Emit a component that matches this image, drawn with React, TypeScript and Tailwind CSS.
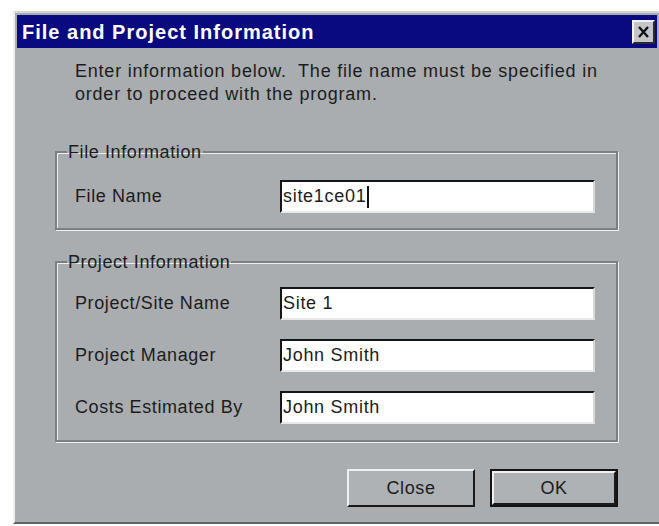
const FONT = "font-['Liberation_Sans',Arial,sans-serif]";

function CloseBox() {
  return (
    <div className="w-[23px] h-[24px] bg-[#c3c6c8] border-2 border-t-[#f2f2f2] border-l-[#f2f2f2] border-b-[#2a2a2a] border-r-[#2a2a2a] flex items-center justify-center">
      <svg width="13" height="12" viewBox="0 0 13 12">
        <path d="M2 1 L11 11 M11 1 L2 11" stroke="#111" strokeWidth="2.4" />
      </svg>
    </div>
  );
}

function Field({ label, value, caret }: { label: string; value: string; caret?: boolean }) {
  return (
    <div className="flex items-center">
      <span className="w-[205px] text-[18px] tracking-[0.6px] text-[#1c1c1c]">{label}</span>
      <div className="w-[315px] h-[33px] bg-white border-2 border-t-[#161616] border-l-[#161616] border-b-[#e6e8e9] border-r-[#d6d8d9] flex items-center pl-[1px] text-[18px] tracking-[0.7px] text-[#1c1c1c]">
        <span>{value}</span>
        {caret && <span className="w-[2px] h-[22px] bg-[#111] ml-[1px]" />}
      </div>
    </div>
  );
}

function Group({ title, children }: { title: string; children: React.ReactNode }) {
  return (
    <fieldset className="w-[563px] border-2 border-[#7c8083] shadow-[inset_1px_1px_0_#eceeef,1px_1px_0_#eceeef] pl-[18px]">
      <legend className="-ml-[8px] px-[1px] text-[18px] tracking-[0.6px] text-[#1c1c1c] leading-[20px]">{title}</legend>
      {children}
    </fieldset>
  );
}

function Button({ label, primary }: { label: string; primary?: boolean }) {
  const face =
    'bg-[#aeb2b5] border-2 border-t-[#eef0f1] border-l-[#eef0f1] border-b-[#1a1a1a] border-r-[#1a1a1a] flex items-center justify-center text-[18px] tracking-[0.6px] text-[#1c1c1c]';
  if (primary) {
    return (
      <div className="w-[128px] h-[38px] border-2 border-[#141414] flex">
        <div className={`flex-1 ${face}`}>{label}</div>
      </div>
    );
  }
  return <div className={`w-[128px] h-[38px] ${face}`}>{label}</div>;
}

export default function App() {
  return (
    <div className={`w-[659px] h-[526px] bg-white pt-[11px] pl-[13px] overflow-hidden ${FONT}`}>
      <div className="w-[646px] h-[513px] bg-[#a9adb0] border-t-2 border-l-2 border-t-[#d4d7d9] border-l-[#eef0f1] border-b-2 border-b-[#5d6164] p-[2px] flex flex-col">
        <div className="h-[33px] bg-[#0a0a80] flex items-center justify-between pl-[5px] pr-[2px]">
          <span className="text-white font-bold text-[20px] tracking-[1px]">File and Project Information</span>
          <CloseBox />
        </div>

        <div className="pl-[38px] flex flex-col">
          <p className="mt-[12px] pl-[20px] text-[18px] leading-[23px] text-[#1c1c1c] tracking-[0.78px]">
            Enter information below.&nbsp; The file name must be specified in
            <br />
            order to proceed with the program.
          </p>

          <div className="mt-[36px]">
            <Group title="File Information">
              <div className="mt-[18px] mb-[15px]">
                <Field label="File Name" value="site1ce01" caret />
              </div>
            </Group>
          </div>

          <div className="mt-[22px]">
            <Group title="Project Information">
              <div className="mt-[15px] mb-[16px] flex flex-col gap-[19px]">
                <Field label="Project/Site Name" value="Site 1" />
                <Field label="Project Manager" value="John Smith" />
                <Field label="Costs Estimated By" value="John Smith" />
              </div>
            </Group>
          </div>

          <div className="mt-[27px] w-[563px] flex justify-end gap-[15px]">
            <Button label="Close" />
            <Button label="OK" primary />
          </div>
        </div>
      </div>
    </div>
  );
}
